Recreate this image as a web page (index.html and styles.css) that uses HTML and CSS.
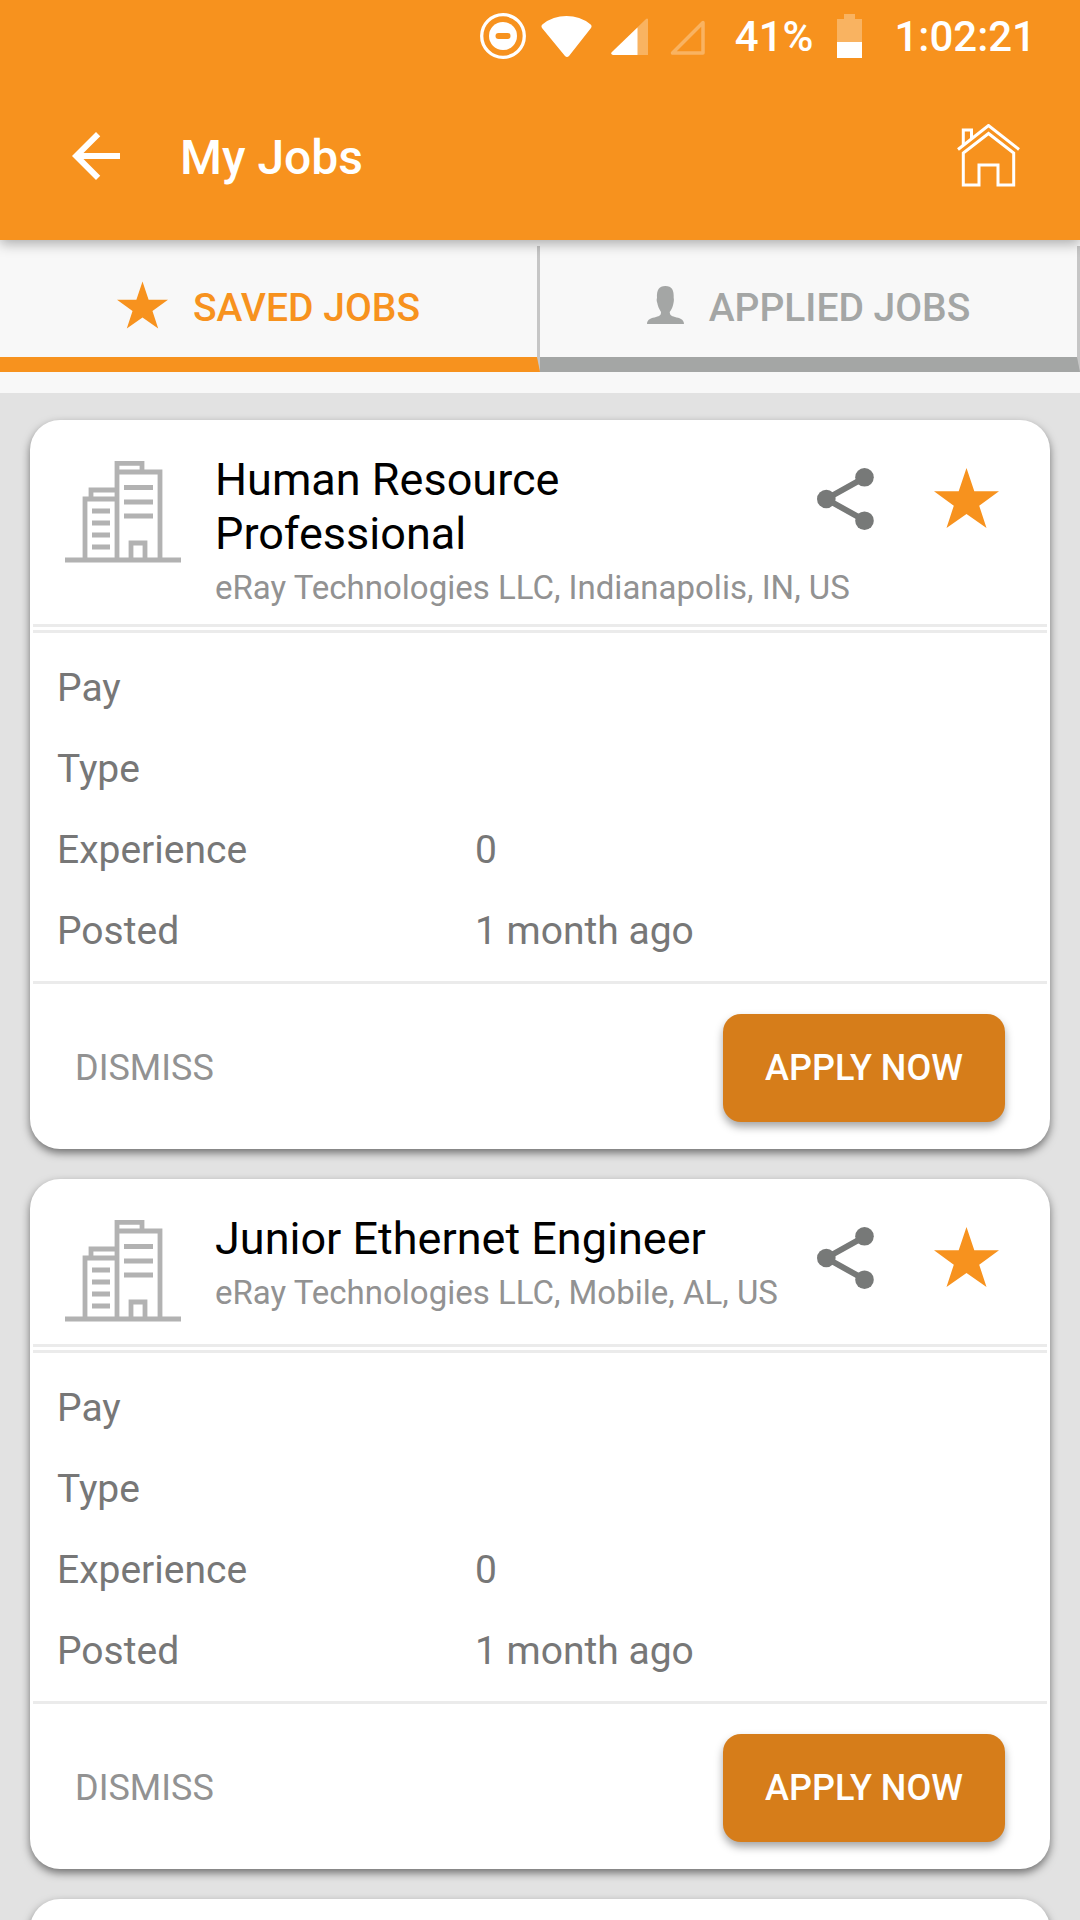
FILE: index.html
```
<!DOCTYPE html>
<html lang="en">
<head>
<meta charset="utf-8">
<meta name="viewport" content="width=device-width, initial-scale=1.0">
<title>My Jobs</title>
<link rel="stylesheet" href="styles.css">
</head>
<body>
<svg class="symbols" aria-hidden="true">
  <symbol id="star" viewBox="0 0 65 60">
    <path d="M32.5 0L40.3 23.2H65L45.2 37.7L52.5 60L32.5 46L12.5 60L19.8 37.7L0 23.2H24.7Z" fill="#f7921e"/>
  </symbol>
  <symbol id="share" viewBox="0 0 57 62">
    <path d="M48 9.3L9.3 31L48 52.7" fill="none" stroke="#777978" stroke-width="6"/>
    <g fill="#777978"><circle cx="47.5" cy="9.3" r="9.3"/><circle cx="9.3" cy="31" r="9.3"/><circle cx="47.5" cy="52.7" r="9.3"/></g>
  </symbol>
  <symbol id="building" viewBox="0 0 116 102">
    <g fill="none" stroke="#b2b2b2" stroke-width="4.800">
      <path d="M0 99H116"/>
      <path d="M52 99V2.400H77V11M52 11H95V99"/>
      <path d="M20 99V38H52M26 38V29H52"/>
      <path d="M66 99V82H80V99"/>
      <path d="M59 26.500H88M59 41H88M59 55H88M27 50H45M27 62H45M27 74H45M27 86H45"/>
    </g>
  </symbol>
</svg>

<div class="status">
  <svg class="dnd" viewBox="0 0 46 46"><circle cx="23" cy="23" r="21.300" fill="none" stroke="#fff" stroke-width="3.300"/><circle cx="23" cy="23" r="14" fill="#fff"/><rect x="15.500" y="20" width="15" height="6" rx="3" fill="#f7921e"/></svg>
  <svg class="wifi" viewBox="0 0 51 41"><path d="M24 40L1 12Q-.5 9.500 2 8Q12 0 25.500 0Q39 0 49 8Q51.500 9.500 50 12L28 40Q26 42 24 40Z" fill="#fff"/></svg>
  <svg class="signal" viewBox="0 0 37 37"><path d="M2 37H37V1Q36 0 35 1L1 34Q-1 36 2 37Z" fill="#fff" opacity=".3"/><path d="M2 37H26.500V9.500L1 34Q-1 36 2 37Z" fill="#fff"/></svg>
  <svg class="signal" viewBox="0 0 37 37"><path d="M4.500 35H35V4.500Z" fill="none" stroke="#fff" stroke-width="3.500" stroke-linejoin="round" opacity=".3"/></svg>
  <span class="percent">41%</span>
  <svg class="battery" viewBox="0 0 25 44"><path d="M7 0H18V5H25V28H0V5H7Z" fill="#fff" opacity=".3"/><path d="M0 28H25V44H0Z" fill="#fff"/></svg>
  <span class="clock">1:02:21</span>
</div>

<header class="appbar">
  <button class="icon-btn" aria-label="Back">
    <svg class="back" viewBox="4 4 16 16"><path d="M20 11H7.830l5.590-5.590L12 4l-8 8 8 8 1.410-1.410L7.830 13H20v-2z" fill="#fff"/></svg>
  </button>
  <h1>My Jobs</h1>
  <button class="icon-btn" aria-label="Home">
    <svg class="home" viewBox="0 1 63 64"><g fill="none" stroke="#fff" stroke-width="3"><path d="M1 26.500L31.500 2.500L62 26.500"/><path d="M31.500 10.500L6.300 30V62H22V42H41V62H56.700V30Z"/><path d="M6.300 22V7H14.500V15"/></g></svg>
  </button>
</header>

<nav class="tabs">
  <button class="tab active">
    <svg class="tab-star"><use href="#star"/></svg>
    <span>SAVED JOBS</span>
  </button>
  <button class="tab">
    <svg class="tab-user" viewBox="0 0 37 38"><path d="M0 38C0 33 5 32 9 31C13 30 14 29 14 26C12 23 10.500 19 10.300 17C9.500 15 9.500 13 10 12C9.500 4 12 0 18.300 0C25 0 27 4 26.700 12C27 13 27 15 26.500 17C26 20 25 23 22.700 26C23 29 24 30 28 31C32 32 37 33 37 38Z" fill="#a4a6a5"/></svg>
    <span>APPLIED JOBS</span>
  </button>
</nav>

<main class="jobs">
  <article class="card">
    <div class="card-head">
      <svg class="logo"><use href="#building"/></svg>
      <div class="info">
        <h2>Human Resource Professional</h2>
        <p>eRay Technologies LLC, Indianapolis, IN, US</p>
      </div>
      <div class="actions">
        <button class="icon-btn" aria-label="Share"><svg class="share"><use href="#share"/></svg></button>
        <button class="icon-btn" aria-label="Saved"><svg class="star"><use href="#star"/></svg></button>
      </div>
    </div>
    <dl class="details">
      <dt>Pay</dt><dd></dd>
      <dt>Type</dt><dd></dd>
      <dt>Experience</dt><dd>0</dd>
      <dt>Posted</dt><dd>1 month ago</dd>
    </dl>
    <div class="card-foot">
      <button class="dismiss">DISMISS</button>
      <button class="apply">APPLY NOW</button>
    </div>
  </article>

  <article class="card">
    <div class="card-head">
      <svg class="logo"><use href="#building"/></svg>
      <div class="info">
        <h2>Junior Ethernet Engineer</h2>
        <p>eRay Technologies LLC, Mobile, AL, US</p>
      </div>
      <div class="actions">
        <button class="icon-btn" aria-label="Share"><svg class="share"><use href="#share"/></svg></button>
        <button class="icon-btn" aria-label="Saved"><svg class="star"><use href="#star"/></svg></button>
      </div>
    </div>
    <dl class="details">
      <dt>Pay</dt><dd></dd>
      <dt>Type</dt><dd></dd>
      <dt>Experience</dt><dd>0</dd>
      <dt>Posted</dt><dd>1 month ago</dd>
    </dl>
    <div class="card-foot">
      <button class="dismiss">DISMISS</button>
      <button class="apply">APPLY NOW</button>
    </div>
  </article>

  <article class="card"></article>
</main>
</body>
</html>
```
FILE: styles.css
```
* {
  margin: 0;
  padding: 0;
  box-sizing: border-box;
}
body {
  display: flex;
  flex-direction: column;
  height: 100vh;
  overflow: hidden;
  background: #e2e2e2;
  font-family: Roboto, sans-serif;
}
button {
  border: none;
  background: none;
  font-family: inherit;
  cursor: pointer;
}
svg {
  display: block;
  flex-shrink: 0;
}
.symbols {
  position: absolute;
  width: 0;
  height: 0;
}

/* status bar */
.status {
  display: flex;
  flex-shrink: 0;
  align-items: center;
  justify-content: flex-end;
  position: relative;
  z-index: 2;
  height: 72px;
  padding-right: 44px;
  background: #f7921e;
  color: #fff;
  font-size: 42px;
  font-weight: 500;
}
.dnd {
  width: 46px;
  height: 46px;
}
.wifi {
  width: 51px;
  height: 41px;
  margin: 0 19px 0 15px;
}
.signal {
  width: 37px;
  height: 37px;
  margin-right: 20px;
}
.percent {
  margin: 0 24px 0 10px;
}
.battery {
  width: 25px;
  height: 44px;
  margin-right: 32px;
}

/* title bar */
.appbar {
  display: flex;
  flex-shrink: 0;
  align-items: center;
  position: relative;
  z-index: 1;
  height: 168px;
  padding: 0 60px 0 72px;
  background: #f7921e;
  box-shadow: 0 4px 12px rgba(0, 0, 0, .3);
}
.appbar h1 {
  flex: 1;
  margin-left: 60px;
  padding-top: 3px;
  color: #fff;
  font-size: 48px;
  font-weight: 500;
}
.back {
  width: 48px;
  height: 48px;
}
.home {
  width: 63px;
  height: 64px;
}

/* tabs */
.tabs {
  display: flex;
  flex-shrink: 0;
  padding: 6px 0 21px;
  background: #f8f8f8;
}
.tab {
  display: flex;
  flex: 1;
  align-items: center;
  justify-content: center;
  gap: 25px;
  height: 126px;
  padding-top: 6px;
  border-right: 3px solid #c6c6c6;
  border-bottom: 15px solid #a4a6a5;
  color: #a4a6a5;
  font-size: 39px;
  font-weight: 500;
}
.tab span {
  padding-top: 6px;
}
.tab.active {
  border-bottom-color: #f7921e;
  color: #f7921e;
}
.tab-star {
  width: 51px;
  height: 48px;
}
.tab-user {
  width: 37px;
  height: 38px;
}

/* job cards */
.jobs {
  display: flex;
  flex: 1;
  flex-direction: column;
  gap: 30px;
  min-height: 0;
  padding: 27px 30px 0;
  overflow: hidden;
}
.card {
  flex-shrink: 0;
  min-height: 165px;
  padding: 0 3px;
  border-radius: 30px;
  background: #fff;
  box-shadow: 0 4px 8px rgba(0, 0, 0, .5);
}
.card-head {
  display: flex;
  min-height: 174px;
  padding: 33px 48px 9px 32px;
  border-bottom: 9px double #ebebeb;
}
.logo {
  width: 116px;
  height: 102px;
  margin-top: 8px;
}
.info {
  flex: 1;
  min-width: 0;
  margin: 0 20px 0 34px;
}
.info h2 {
  font-size: 45px;
  font-weight: 400;
  line-height: 54px;
}
.info p {
  color: #929292;
  font-size: 33px;
  line-height: 54px;
  white-space: nowrap;
}
.actions {
  display: flex;
  gap: 60px;
  align-items: flex-start;
  padding-top: 15px;
}
.share {
  width: 57px;
  height: 62px;
}
.star {
  width: 65px;
  height: 60px;
}
.details {
  display: grid;
  grid-template-columns: 418px 1fr;
  padding: 15px 24px 9px;
  border-bottom: 3px solid #ebebeb;
  color: #777;
  font-size: 39px;
  line-height: 81px;
}
.card-foot {
  display: flex;
  align-items: center;
  justify-content: space-between;
  padding: 30px 42px 27px;
}
.dismiss {
  color: #929292;
  font-size: 36px;
}
.apply {
  min-width: 282px;
  height: 108px;
  border-radius: 18px;
  background: #d67d1a;
  box-shadow: 0 5px 8px rgba(0, 0, 0, .35);
  color: #fff;
  font-size: 36px;
  font-weight: 500;
}
```
